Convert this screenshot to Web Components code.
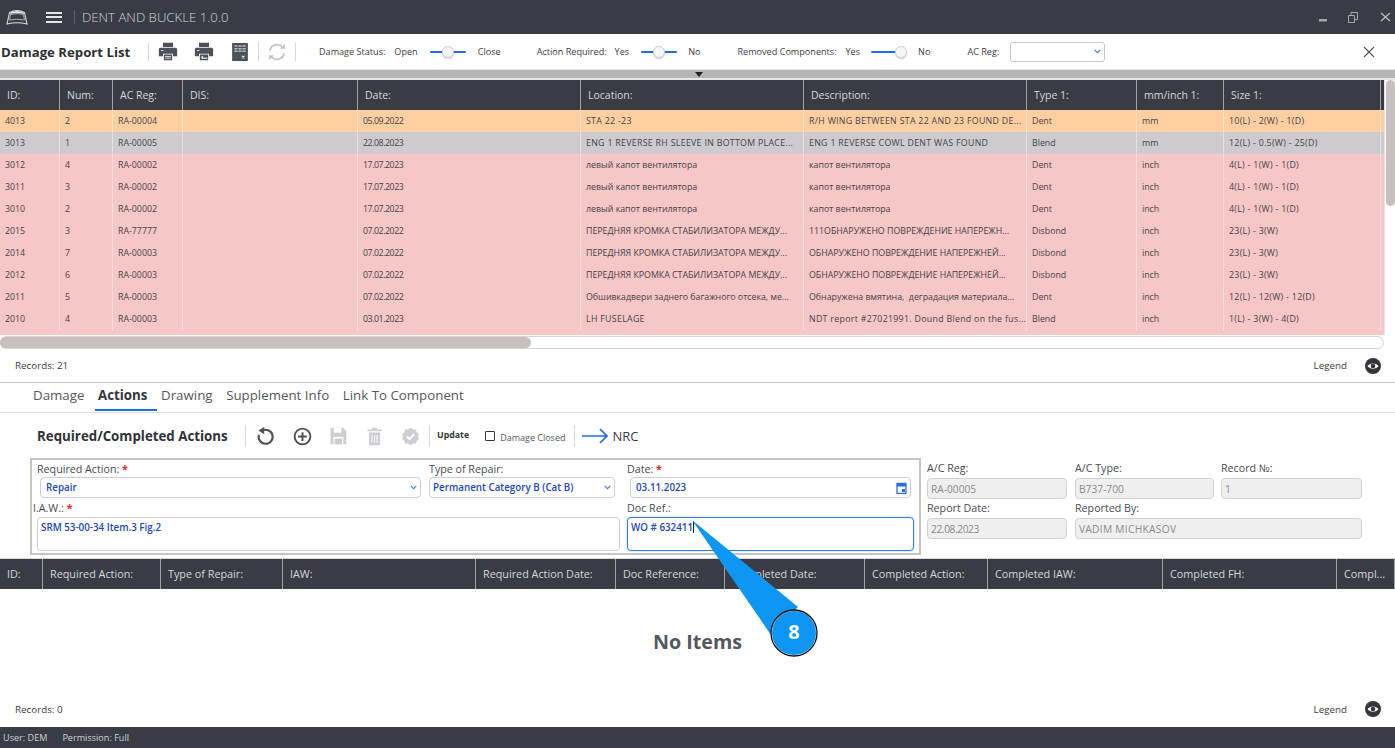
<!DOCTYPE html>
<html>
<head>
<meta charset="utf-8">
<title>Dent and Buckle</title>
<style>
html, body { margin: 0; height: 100%; overflow: hidden; background: #fff; }
body { font-family: "Open Sans", "Noto Sans", sans-serif; color: #333; }
#app { display: flex; flex-direction: column; height: 748px; position: relative; }
</style>
</head>
<body>
<div id="app">
	<app-titlebar></app-titlebar>
	<list-toolbar></list-toolbar>
	<split-bar></split-bar>
	<report-table></report-table>
	<records-bar count="21" style="height:33px"></records-bar>
	<tab-strip></tab-strip>
	<action-toolbar></action-toolbar>
	<action-form></action-form>
	<actions-table></actions-table>
	<records-bar count="0" style="height:34px;padding-bottom:2px"></records-bar>
	<status-bar></status-bar>
	<step-callout>8</step-callout>
</div>
<script>
const ICONS = {
	printer: `<path d="M6 1h12v5H6zM3 7h18a2 2 0 0 1 2 2v8h-5v-3H6v3H1V9a2 2 0 0 1 2-2zM7 15h10v7H7z" fill="#4d5259"/><path d="M8.5 17h7v.9h-7zM8.5 19h7v.9h-7zM3.500 9.500h3v1h-3z" fill="#fff"/>`,
	printer2: `<path d="M6 1h12v5H6zM3 7h18a2 2 0 0 1 2 2v8h-5v-3H6v3H1V9a2 2 0 0 1 2-2zM7 15h10v7H7z" fill="#4d5259"/><path d="M9 17h2v2h5v1H9zM3.500 9.500h3v1h-3z" fill="#fff"/>`,
	excel: `<path d="M1.500 0h21v24h-21z" fill="#4d5259"/><path d="M4.500 3h4.300v2H4.500zM9.900 3h4.300v2H9.900zM15.300 3h4.300v2h-4.300zM4.500 6.500h4.300v2H4.500zM9.900 6.500h4.300v2H9.900zM15.300 6.500h4.300v2h-4.300zM4.500 10h4.300v2H4.500zM9.900 10h4.300v2H9.900zM15.300 10h4.300v2h-4.300z" fill="#b9bbc0"/><path d="M14.500 17l3.500 3.500M18 17l-3.500 3.500" stroke="#fff" stroke-width="1.400"/>`,
	sync: `<path d="M3.500 10.500A8.700 8.700 0 0 1 18.500 6M20.500 13.500A8.700 8.700 0 0 1 5.500 18" fill="none" stroke="#c4c4c6" stroke-width="2.200"/><path d="M15.500 8h6V2zM8.500 16h-6v6z" fill="#c4c4c6"/>`,
	undo: `<path d="M8 5.500A8 8 0 1 1 4.500 10" fill="none" stroke="#4d5157" stroke-width="2.400"/><path d="M10.500 1v8.500L4 5.200z" fill="#4d5157"/>`,
	add: `<circle cx="12" cy="12" r="9" fill="none" stroke="#4d5157" stroke-width="2.200"/><path d="M12 7v10M7 12h10" stroke="#4d5157" stroke-width="2.200"/>`,
	save: `<path d="M3 2h15l4 4v16H3z" fill="#ccced3"/><path d="M7 2h9v6H7z" fill="#fff"/><path d="M6.500 13h12v9h-12z" fill="#fff"/><path d="M8 15h9v7H8z" fill="#ccced3"/>`,
	trash: `<path d="M9 1h6v2h6v2.500H3V3h6zM5 7h14v16H5z" fill="#ccced3"/><path d="M8.700 10v10M12 10v10M15.300 10v10" stroke="#fff" stroke-width="1.300"/>`,
	check: `<path d="M12 1l3 2.200 3.700-.2 1 3.600 3 2.200L21.500 12l1.200 3.200-3 2.200-1 3.600-3.700-.2L12 23l-3-2.200-3.700.2-1-3.600-3-2.200L2.500 12 1.300 8.800l3-2.200 1-3.600 3.700.2z" fill="#ccced3"/><path d="M7.500 12l3.200 3.200 6-6" fill="none" stroke="#fff" stroke-width="2.400"/>`
}
function icon(name, size) {
	return `<svg width="${size}" height="${size}" viewBox="0 0 24 24">${ICONS[name]}</svg>`
}
const chevron = `<svg class="chev" width="7" height="5" viewBox="0 0 7 5"><path d="M.7.8l2.800 2.800L6.300.8" fill="none" stroke="#4a78d6" stroke-width="1.100"/></svg>`

class AppTitlebar extends HTMLElement {
	constructor() {
		super()
		this.attachShadow({ mode: 'open' }).innerHTML = `
			<style>
				:host { display: flex; align-items: center; height: 34px; background: #393c45; color: #d3d4d7; flex: none; }
				.logo { margin-left: 6px; }
				.menu { margin-left: 18px; width: 16px; height: 11px; border-top: 2px solid #e6e6e8; border-bottom: 2px solid #e6e6e8; position: relative; box-sizing: border-box; }
				.menu::after { content: ""; position: absolute; left: 0; right: 0; top: 2.500px; height: 2px; background: #e6e6e8; }
				.sep { width: 1px; height: 14px; background: #5d6068; margin: 0 7px 0 12px; }
				.title { font-size: 13.200px; font-weight: 300; }
				.win { margin-left: auto; display: flex; align-items: center; padding-right: 4px; }
			</style>
			<svg class="logo" width="22" height="16" viewBox="0 0 22 16"><path d="M1 15L3.500 3.500Q11-.5 18.500 3.500L21 15Q11 12.500 1 15z" fill="none" stroke="#dcdce0" stroke-width="1.100"/><path d="M4.500 3.500Q11 .5 17.500 3.500L18 5Q11 2.800 4 5z" fill="#e6e6e8"/><path d="M4.500 5.500Q11 3.500 17.500 5.500L18.500 11Q11 9.500 3.500 11z" fill="#393c45" stroke="#c9c9ce" stroke-width=".8"/></svg>
			<div class="menu"></div>
			<div class="sep"></div>
			<div class="title">DENT AND BUCKLE 1.0.0</div>
			<div class="win">
				<svg width="9" height="9" viewBox="0 0 9 9"><path d="M0 6h8v2.500H0z" fill="#a5a6aa"/></svg>
				<svg style="margin-left:20px" width="10" height="11" viewBox="0 0 10 11"><path d="M.5 3.500h6v7h-6zM3 3V.5h6.500v7H7" fill="none" stroke="#a5a6aa"/></svg>
				<svg style="margin-left:22px" width="11" height="10" viewBox="0 0 11 10"><path d="M1 1l9 8M10 1L1 9" stroke="#bcbdc0" stroke-width="1.300"/></svg>
			</div>`
	}
}
customElements.define('app-titlebar', AppTitlebar)

class ToggleSwitch extends HTMLElement {
	constructor() {
		super()
		const pos = this.getAttribute('pos') || 'mid'
		this.attachShadow({ mode: 'open' }).innerHTML = `
			<style>
				:host { display: inline-block; position: relative; width: 36px; height: 16px; flex: none; }
				.track { position: absolute; left: 0; right: 0; top: 7px; height: 2px; background: #1f6bed; border-radius: 1px; }
				.knob { position: absolute; top: 2px; left: ${pos == 'end' ? 24 : 12}px; width: 12px; height: 12px; border-radius: 50%; background: #f6f6f7; border: 1px solid #d2d2d6; box-sizing: border-box; box-shadow: 0 1px 2px rgba(0,0,0,.2); }
			</style>
			<div class="track"></div><div class="knob"></div>`
	}
}
customElements.define('toggle-switch', ToggleSwitch)

class ListToolbar extends HTMLElement {
	constructor() {
		super()
		this.attachShadow({ mode: 'open' }).innerHTML = `
			<style>
				:host { display: flex; align-items: center; height: 35px; flex: none; font-size: 9.100px; color: #3c3c40; background: #fff; }
				h1 { margin: 0 0 0 1px; font-size: 13.200px; font-weight: 700; color: #2e3035; width: 147px; white-space: nowrap; }
				.sep { width: 1px; height: 19px; background: #d8d8da; flex: none; }
				svg { flex: none; display: block; }
				.t { white-space: nowrap; flex: none; }
				.sel { width: 95px; height: 20px; box-sizing: border-box; border: 1px solid #c9c9cd; border-radius: 3px; margin-left: 11px; display: flex; align-items: center; justify-content: flex-end; padding-right: 3px; flex: none; }
				.close { margin-left: auto; margin-right: 20px; }
			</style>
			<h1>Damage Report List</h1>
			<div class="sep"></div>
			<span style="margin-left:9px">${icon('printer', 20)}</span>
			<span style="margin-left:16px">${icon('printer2', 20)}</span>
			<span style="margin-left:17px">${icon('excel', 18)}</span>
			<div class="sep" style="margin-left:9px"></div>
			<span style="margin-left:8px">${icon('sync', 20)}</span>
			<div class="sep" style="margin-left:8px"></div>
			<span class="t" style="margin-left:23px">Damage Status:</span>
			<span class="t" style="margin-left:9px">Open</span>
			<toggle-switch style="margin-left:12px"></toggle-switch>
			<span class="t" style="margin-left:12px">Close</span>
			<span class="t" style="margin-left:36px">Action Required:</span>
			<span class="t" style="margin-left:8px">Yes</span>
			<toggle-switch style="margin-left:12px"></toggle-switch>
			<span class="t" style="margin-left:11px">No</span>
			<span class="t" style="margin-left:37px">Removed Components:</span>
			<span class="t" style="margin-left:9px">Yes</span>
			<toggle-switch pos="end" style="margin-left:11px"></toggle-switch>
			<span class="t" style="margin-left:11px">No</span>
			<span class="t" style="margin-left:37px">AC Reg:</span>
			<div class="sel">${chevron}</div>
			<svg class="close" width="12" height="12" viewBox="0 0 12 12"><path d="M1 1l10 10M11 1L1 11" stroke="#55585e" stroke-width="1.200"/></svg>`
	}
}
customElements.define('list-toolbar', ListToolbar)

class SplitBar extends HTMLElement {
	constructor() {
		super()
		this.attachShadow({ mode: 'open' }).innerHTML = `
			<style>
				:host { display: flex; justify-content: center; align-items: center; height: 11px; flex: none; box-sizing: border-box; background: #b6b6b6; border-top: 1px solid #e2e2e2; border-bottom: 2px solid #e8e8e8; }
				i { width: 0; height: 0; border-left: 4px solid transparent; border-right: 4px solid transparent; border-top: 5px solid #222; margin-left: 3px; }
			</style><i></i>`
	}
}
customElements.define('split-bar', SplitBar)

class TableHead extends HTMLElement {
	constructor() {
		super()
		const cols = JSON.parse(this.getAttribute('cols'))
		const cells = cols.map(c => `<div class="c" style="width:${c[1]}px">${c[0]}</div>`).join('')
		this.attachShadow({ mode: 'open' }).innerHTML = `
			<style>
				:host { display: flex; height: 30px; flex: none; background: #393c45; color: #d6d7da; font-size: var(--head-size, 10.500px); overflow: hidden; }
				.c { flex: none; box-sizing: border-box; line-height: 30px; padding-left: 7px; border-right: 1px solid #a0a2a7; white-space: nowrap; overflow: hidden; }
			</style>${cells}`
	}
}
customElements.define('table-head', TableHead)

const REPORT_COLS = [['ID:',60],['Num:',53],['AC Reg:',70],['DIS:',175],['Date:',223],['Location:',223],['Description:',223],['Type 1:',110],['mm/inch 1:',87],['Size 1:',157]]
const LOC_RU = 'ПЕРЕДНЯЯ КРОМКА СТАБИЛИЗАТОРА МЕЖДУ...'
const REPORT_ROWS = [
	['o','4013','2','RA-00004','','05.09.2022','STA 22 -23','R/H WING BETWEEN STA 22 AND 23 FOUND DE...','Dent','mm','10(L) - 2(W) - 1(D)'],
	['g','3013','1','RA-00005','','22.08.2023','ENG 1 REVERSE RH SLEEVE IN BOTTOM PLACE...','ENG 1 REVERSE COWL DENT WAS FOUND','Blend','mm','12(L) - 0.5(W) - 25(D)'],
	['p','3012','4','RA-00002','','17.07.2023','левый капот вентилятора','капот вентилятора','Dent','inch','4(L) - 1(W) - 1(D)'],
	['p','3011','3','RA-00002','','17.07.2023','левый капот вентилятора','капот вентилятора','Dent','inch','4(L) - 1(W) - 1(D)'],
	['p','3010','2','RA-00002','','17.07.2023','левый капот вентилятора','капот вентилятора','Dent','inch','4(L) - 1(W) - 1(D)'],
	['p','2015','3','RA-77777','','07.02.2022',LOC_RU,'111ОБНАРУЖЕНО ПОВРЕЖДЕНИЕ НАПЕРЕЖН...','Disbond','inch','23(L) - 3(W)'],
	['p','2014','7','RA-00003','','07.02.2022',LOC_RU,'ОБНАРУЖЕНО ПОВРЕЖДЕНИЕ НАПЕРЕЖНЕЙ...','Disbond','inch','23(L) - 3(W)'],
	['p','2012','6','RA-00003','','07.02.2022',LOC_RU,'ОБНАРУЖЕНО ПОВРЕЖДЕНИЕ НАПЕРЕЖНЕЙ...','Disbond','inch','23(L) - 3(W)'],
	['p','2011','5','RA-00003','','07.02.2022','Обшивкадвери заднего багажного отсека, ме...','Обнаружена вмятина,  деградация материала...','Dent','inch','12(L) - 12(W) - 12(D)'],
	['p','2010','4','RA-00003','','03.01.2023','LH FUSELAGE','NDT report #27021991. Dound Blend on the fus...','Blend','inch','1(L) - 3(W) - 4(D)']
]

// Open Sans runs narrower on latin capitals and wider on digits than the original font
function cellClass(v, i) {
	if (i == 4) return 'date'
	if (i == 9) return 'size'
	if (/[A-Z]{3}/.test(v) || /^NDT/.test(v)) return 'caps'
	return ''
}

class ReportTable extends HTMLElement {
	constructor() {
		super()
		const widths = REPORT_COLS.map(c => c[1])
		const rows = REPORT_ROWS.map(r => `<div class="r ${r[0]}">` + r.slice(1).map((v, i) => `<div class="c ${cellClass(v, i)}" style="width:${widths[i]}px">${v}</div>`).join('') + `</div>`).join('')
		this.attachShadow({ mode: 'open' }).innerHTML = `
			<style>
				:host { display: block; flex: none; height: 269px; position: relative; overflow: hidden; }
				.body { height: 225px; overflow: hidden; background: #f7c6c6; padding-right: 11px; }
				.r { display: flex; height: 22px; font-size: 8.800px; color: #444448; }
				.c { flex: none; box-sizing: border-box; line-height: 23px; padding-left: 5px; border-right: 1px solid rgba(255,255,255,.45); white-space: pre; overflow: hidden; }
				.date { letter-spacing: -.45px; }
				.size { letter-spacing: .3px; }
				.caps { letter-spacing: .3px; }
				.o { background: #ffcfa2; }
				.g { background: #cdcbcf; }
				.p { background: #f7c6c6; }
				.hbar { height: 13px; margin-top: 1px; box-sizing: border-box; border: 1px solid #d8d4d4; border-left: 0; border-radius: 7px; margin-right: 11px; }
				.hbar i { display: block; width: 531px; height: 11px; border-radius: 6px; background: #c8bfbf; }
				.vbar { position: absolute; top: 0; right: 0; width: 11px; bottom: 14px; background: #fff; border-left: 1px solid #e4e4e4; box-sizing: border-box; }
				.vbar i { position: absolute; top: 0; right: 0; width: 9px; height: 126px; border-radius: 5px; background: #c8bfbf; }
			</style>
			<table-head cols='${JSON.stringify(REPORT_COLS)}'></table-head>
			<div class="body">${rows}</div>
			<div class="hbar"><i></i></div>
			<div class="vbar"><i></i></div>`
	}
}
customElements.define('report-table', ReportTable)

class RecordsBar extends HTMLElement {
	constructor() {
		super()
		this.attachShadow({ mode: 'open' }).innerHTML = `
			<style>
				:host { display: flex; align-items: center; flex: none; font-size: 9.800px; color: #3c3c40; padding: 0 14px 0 15px; box-sizing: border-box; }
				.leg { margin-left: auto; margin-right: 18px; }
			</style>
			<span>Records: ${this.getAttribute('count')}</span>
			<span class="leg">Legend</span>
			<svg width="16" height="16" viewBox="0 0 16 16"><circle cx="8" cy="8" r="8" fill="#33363d"/><path d="M2.500 8C5 4.500 11 4.500 13.500 8 11 11.500 5 11.500 2.500 8z" fill="#fff"/><circle cx="8" cy="8" r="2.300" fill="#33363d"/></svg>`
	}
}
customElements.define('records-bar', RecordsBar)

class TabStrip extends HTMLElement {
	constructor() {
		super()
		this.attachShadow({ mode: 'open' }).innerHTML = `
			<style>
				:host { display: flex; flex: none; height: 31px; box-sizing: border-box; border-top: 1px solid #c6c6c6; border-bottom: 1px solid #dedede; padding-left: 33px; gap: 13.600px; font-size: 13.300px; color: #55585e; }
				span { line-height: 24px; height: 28px; box-sizing: border-box; white-space: nowrap; }
				.on { font-weight: 700; color: #33363c; border-bottom: 2px solid #1f6bed; padding: 0 10px 0 3px; margin: 0 -10px 0 -3px; }
			</style>
			<span>Damage</span><span class="on">Actions</span><span>Drawing</span><span>Supplement Info</span><span>Link To Component</span>`
	}
}
customElements.define('tab-strip', TabStrip)

class ActionToolbar extends HTMLElement {
	constructor() {
		super()
		this.attachShadow({ mode: 'open' }).innerHTML = `
			<style>
				:host { display: flex; align-items: center; flex: none; height: 45px; padding: 1px 0 0 37px; box-sizing: border-box; }
				h2 { margin: 0; font-size: 13.300px; font-weight: 700; color: #303238; width: 208px; white-space: nowrap; }
				.sep { width: 1px; height: 22px; background: #d8d8da; flex: none; }
				svg { display: block; }
				.up { font-size: 8.800px; font-weight: 700; color: #33363c; margin-left: 7px; margin-top: -2px; }
				.box { width: 10px; height: 10px; box-sizing: border-box; border: 1px solid #33363c; border-radius: 1px; margin-left: 16px; flex: none; }
				.dc { font-size: 9px; color: #55585e; margin-left: 5px; white-space: nowrap; margin-top: 2px; }
				.nrc { font-size: 13px; color: #3a3d44; margin-left: 4px; }
			</style>
			<h2>Required/Completed Actions</h2>
			<div class="sep"></div>
			<span style="margin-left:9px">${icon('undo', 21)}</span>
			<span style="margin-left:16px">${icon('add', 21)}</span>
			<span style="margin-left:15px">${icon('save', 20)}</span>
			<span style="margin-left:17px">${icon('trash', 19)}</span>
			<span style="margin-left:17px">${icon('check', 19)}</span>
			<div class="sep" style="margin-left:9px"></div>
			<span class="up">Update</span>
			<div class="box"></div>
			<span class="dc">Damage Closed</span>
			<div class="sep" style="margin-left:9px"></div>
			<svg style="margin-left:7px" width="26" height="16" viewBox="0 0 26 16"><path d="M0 8h25M18 1l7 7-7 7" fill="none" stroke="#1f6bed" stroke-width="1.700"/></svg>
			<span class="nrc">NRC</span>`
	}
}
customElements.define('action-toolbar', ActionToolbar)

class FormField extends HTMLElement {
	constructor() {
		super()
		const kind = this.getAttribute('kind') || 'input'
		const req = this.hasAttribute('required') ? '<b>*</b>' : ''
		const trail = kind == 'select' ? chevron : kind == 'date'
			? `<svg width="11" height="12" viewBox="0 0 11 12"><path d="M1 1.500h9v10H1z" fill="none" stroke="#2b6fe0" stroke-width="1.300"/><path d="M1 1.500h9v3H1zM6 7h3v3H6z" fill="#2b6fe0"/></svg>` : ''
		this.attachShadow({ mode: 'open' }).innerHTML = `
			<style>
				:host { display: block; font-size: 10.700px; color: #4a4c52; }
				.lab { line-height: 15px; height: var(--lab-h, 15px); white-space: nowrap; padding-left: var(--lab-x, 0); }
				b { color: #e8291c; font-weight: 700; }
				.box { display: flex; align-items: center; justify-content: space-between; box-sizing: border-box; border: 1px solid #cfcfd3; border-radius: 4px; background: #fff; height: var(--h, 21px); margin: var(--box-m, 0); padding: 0 3px 0 var(--pad, 5px); color: #2747b8; font-size: 9.800px; font-weight: 600; white-space: pre; }
				:host([kind=area]) .box { align-items: flex-start; padding-top: 3px; }
				:host([kind=ro]) { --lab-h: 17px; }
				:host([kind=ro]) .box { background: #efefef; color: #8a8a8e; font-weight: 400; border-color: #d2d2d2; font-size: 10.200px; padding-left: 3px; }
				:host([focus]) .box { border-color: #2b7fe8; box-shadow: 0 0 2px #9cc3f5; }
				.caret { display: inline-block; width: 1px; height: 12px; background: #222; vertical-align: -2px; }
			</style>
			<div class="lab">${this.getAttribute('label')} ${req}</div>
			<div class="box"><span><slot></slot>${this.hasAttribute('focus') ? '<i class="caret"></i>' : ''}</span>${trail}</div>`
	}
}
customElements.define('form-field', FormField)

class ActionForm extends HTMLElement {
	constructor() {
		super()
		this.attachShadow({ mode: 'open' }).innerHTML = `
			<style>
				:host { display: flex; flex: none; height: 100px; box-sizing: border-box; padding: 0 0 0 30px; }
				.main { width: 891px; height: 97px; box-sizing: border-box; border: 2px solid #c8c5c0; display: grid; grid-template-columns: 396px 198px 1fr; grid-template-rows: 39px 1fr; padding: 2px 5px 0 1px; }
				.ro { display: grid; grid-template-columns: 148px 146px 141px; grid-template-rows: 40px 40px; margin: 3px 0 0 6px; align-content: start; }
				.a { width: 140px; }
				.b { width: 139px; }
				.c { width: 141px; }
				.wide { width: 287px; grid-column: span 2; }
				.row2 { grid-column: 1 / 3; padding-right: 7px; }
			</style>
			<div class="main">
				<div style="padding-right:8px"><form-field label="Required Action:" kind="select" required style="--lab-x:4px;--box-m:0 0 0 7px">Repair</form-field></div>
				<div style="padding-right:12px"><form-field label="Type of Repair:" kind="select" style="--pad:3px">Permanent Category B (Cat B)</form-field></div>
				<div><form-field label="Date:" kind="date" required style="--box-m:0 3px">03.11.2023</form-field></div>
				<div class="row2"><form-field label="I.A.W.:" kind="area" required style="--lab-h:16px;--h:34px;--pad:3px;--box-m:0 0 0 4px">SRM 53-00-34 Item.3 Fig.2</form-field></div>
				<div><form-field label="Doc Ref.:" kind="area" focus style="--lab-h:16px;--h:34px;--pad:3px">WO # 632411</form-field></div>
			</div>
			<div class="ro">
				<form-field class="a" label="A/C Reg:" kind="ro">RA-00005</form-field>
				<form-field class="b" label="A/C Type:" kind="ro">B737-700</form-field>
				<form-field class="c" label="Record №:" kind="ro">1</form-field>
				<form-field class="a" label="Report Date:" kind="ro"><span style="letter-spacing:-.4px">22.08.2023</span></form-field>
				<form-field class="wide" label="Reported By:" kind="ro"><span style="letter-spacing:.3px">VADIM MICHKASOV</span></form-field>
			</div>`
	}
}
customElements.define('action-form', ActionForm)

class ActionsTable extends HTMLElement {
	constructor() {
		super()
		const cols = [['ID:',43],['Required Action:',118],['Type of Repair:',122],['IAW:',193],['Required Action Date:',140],['Doc Reference:',109],['Completed Date:',140],['Completed Action:',123],['Completed IAW:',175],['Completed FH:',174],['Compl...',58]]
		this.attachShadow({ mode: 'open' }).innerHTML = `
			<style>
				:host { display: flex; flex-direction: column; flex: 1; min-height: 0; border-top: 1px solid #d8d8d8; --head-size: 10.800px; }
				.empty { flex: 1; display: flex; align-items: center; justify-content: center; font-size: 19.700px; font-weight: 700; color: #55585e; }
			</style>
			<table-head cols='${JSON.stringify(cols)}'></table-head>
			<div class="empty">No Items</div>`
	}
}
customElements.define('actions-table', ActionsTable)

class StatusBar extends HTMLElement {
	constructor() {
		super()
		this.attachShadow({ mode: 'open' }).innerHTML = `
			<style>
				:host { display: flex; align-items: center; flex: none; height: 21px; background: #393c45; color: #d0d1d4; font-size: 9.100px; padding-left: 3px; gap: 15px; }
			</style>
			<span>User: DEM</span><span>Permission: Full</span>`
	}
}
customElements.define('status-bar', StatusBar)

class StepCallout extends HTMLElement {
	constructor() {
		super()
		this.attachShadow({ mode: 'open' }).innerHTML = `
			<style>
				:host { position: absolute; left: 690px; top: 518px; width: 130px; height: 140px; display: block; pointer-events: none; }
				svg { position: absolute; left: 0; top: 0; }
				span { position: absolute; left: 81px; top: 91px; width: 46px; height: 46px; line-height: 46px; text-align: center; color: #fff; font-size: 20px; font-weight: 700; }
			</style>
			<svg width="130" height="140" viewBox="0 0 130 140">
				<path d="M2 2L108 89 81 117z" fill="#0d96f4"/>
				<circle cx="104" cy="115" r="22.500" fill="#0d96f4" stroke="#fff" stroke-width="1"/>
				<circle cx="104" cy="115" r="23" fill="none" stroke="#111" stroke-width="1.300"/>
			</svg>
			<span><slot></slot></span>`
	}
}
customElements.define('step-callout', StepCallout)
</script>
</body>
</html>
